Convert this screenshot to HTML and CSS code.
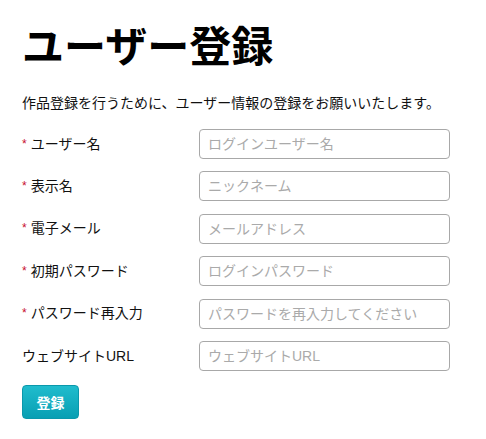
FILE: index.html
```html
<!DOCTYPE html>
<html lang="ja">
<head>
<meta charset="utf-8">
<title>ユーザー登録</title>
<link rel="stylesheet" href="styles.css">
</head>
<body>
<main class="page">
  <h1 class="title">ユーザー登録</h1>
  <p class="lead">作品登録を行うために、ユーザー情報の登録をお願いいたします。</p>
  <form class="form">
    <label class="label"><span class="req">*</span>ユーザー名</label>
    <input class="field" type="text" placeholder="ログインユーザー名">
    <label class="label"><span class="req">*</span>表示名</label>
    <input class="field" type="text" placeholder="ニックネーム">
    <label class="label"><span class="req">*</span>電子メール</label>
    <input class="field" type="text" placeholder="メールアドレス">
    <label class="label"><span class="req">*</span>初期パスワード</label>
    <input class="field" type="password" placeholder="ログインパスワード">
    <label class="label"><span class="req">*</span>パスワード再入力</label>
    <input class="field" type="password" placeholder="パスワードを再入力してください">
    <label class="label">ウェブサイトURL</label>
    <input class="field" type="text" placeholder="ウェブサイトURL">
    <div class="actions"><button class="btn" type="button">登録</button></div>
  </form>
</main>
</body>
</html>
```

FILE: styles.css
```css
* { box-sizing: border-box; }
html, body { margin: 0; background: #fff; }
body {
  font-family: "Liberation Sans", "Noto Sans CJK JP", sans-serif;
  color: #111;
  font-size: 14px;
}
.page { padding: 22px 22px 0 22px; }
.title {
  margin: 0;
  font-size: 42px;
  line-height: 52px;
  font-weight: 700;
  color: #000;
}
.lead {
  margin: 19px 0 0 0;
  font-size: 14px;
  line-height: 20px;
}
.form {
  margin-top: 16px;
  display: grid;
  grid-template-columns: 177px 251px;
  row-gap: 12.4px;
  align-items: center;
}
.label {
  font-size: 14px;
  line-height: 20px;
  color: #111;
}
.req {
  color: #c8102e;
  font-size: 12px;
  margin-right: 4px;
  position: relative;
  top: -1px;
}
.field {
  width: 251px;
  height: 30px;
  border: 1px solid #a8a8a8;
  border-radius: 4px;
  padding: 0 8px;
  font-family: inherit;
  font-size: 14px;
  color: #333;
  background: #fff;
  outline: none;
}
.field::placeholder { color: #aaa; }
.actions { grid-column: 1 / -1; padding-top: 1.5px; }
.btn {
  width: 57px;
  height: 34px;
  border: 1px solid #0a98ab;
  border-radius: 4px;
  background: linear-gradient(#20bccd, #089fb3);
  color: #fff;
  font-family: inherit;
  font-size: 14px;
  font-weight: 700;
  padding: 0;
}
```
